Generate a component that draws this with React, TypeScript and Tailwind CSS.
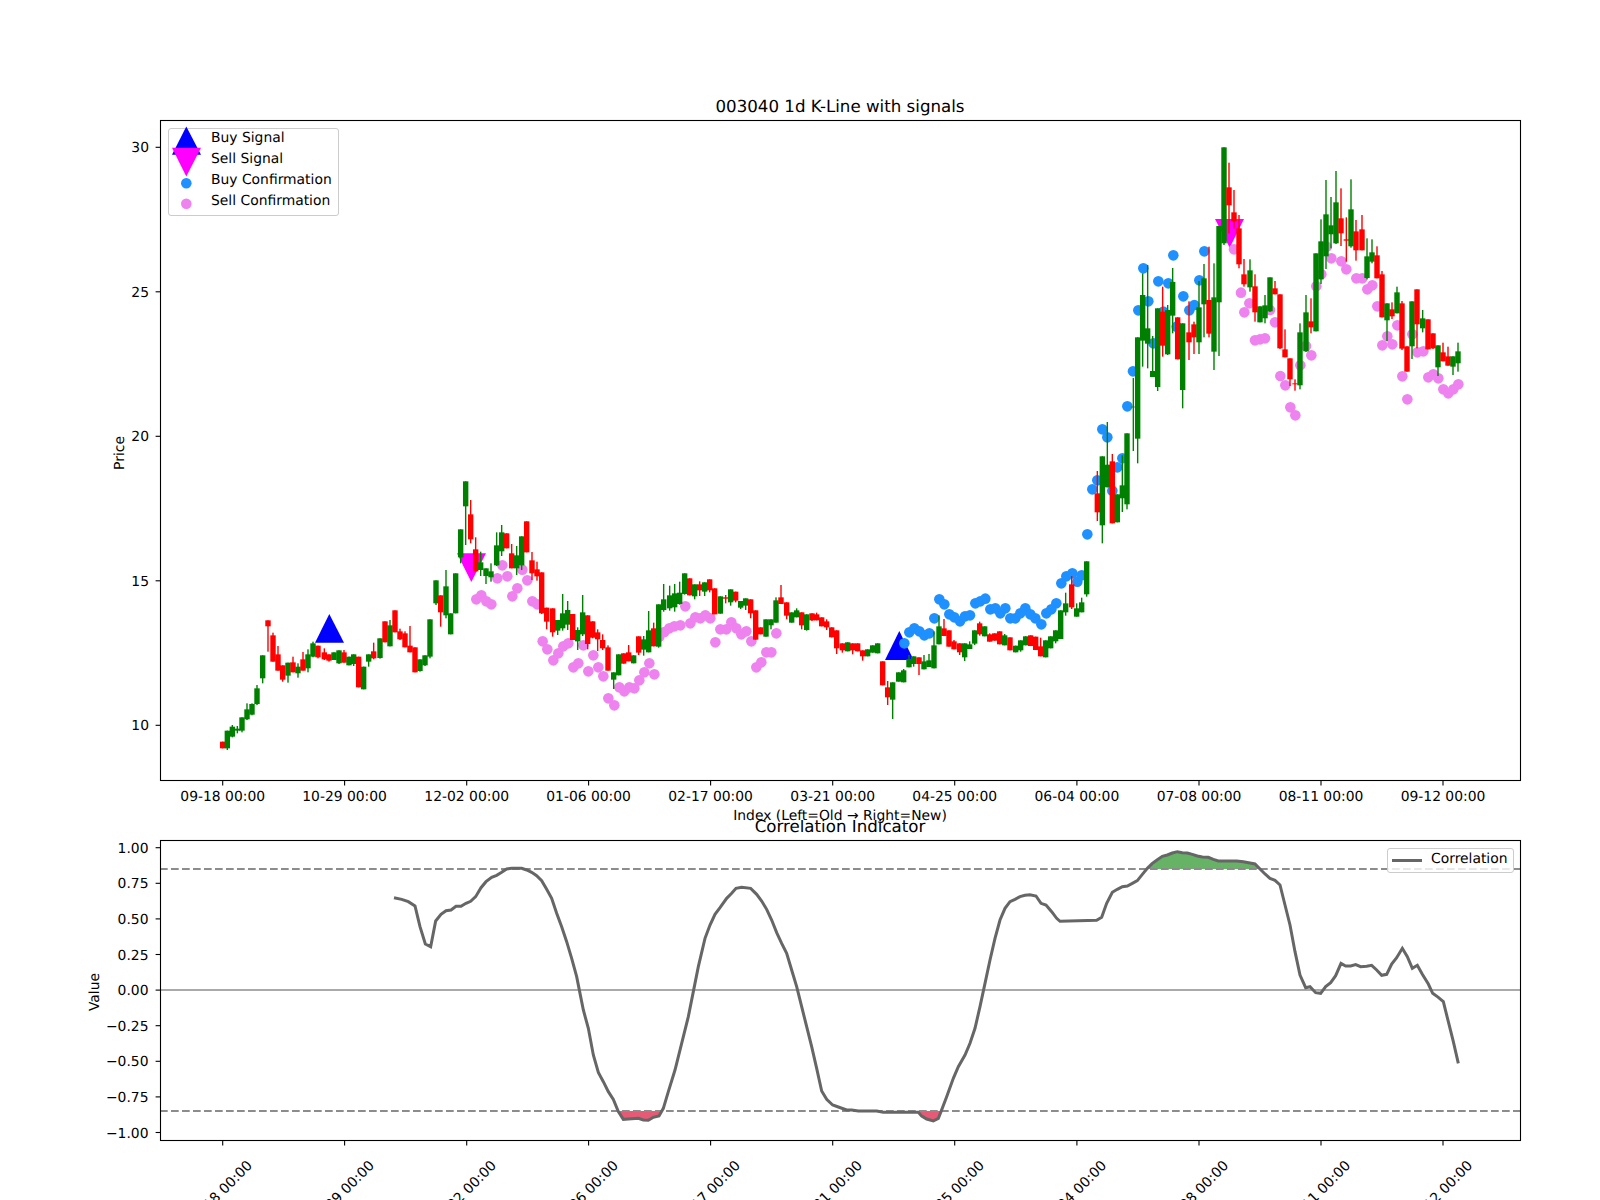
import type { ReactNode } from 'react'

type Candle = [number, number, number, number, number, number]
type Point = [number, number]

const TICK_X = [222.7, 344.6, 466.7, 588.6, 710.6, 832.7, 954.7, 1076.9, 1199, 1321, 1443]
const TICK_LABELS = ['09-18 00:00', '10-29 00:00', '12-02 00:00', '01-06 00:00', '02-17 00:00', '03-21 00:00', '04-25 00:00', '06-04 00:00', '07-08 00:00', '08-11 00:00', '09-12 00:00']
const PRICE_TICKS = [10, 15, 20, 25, 30]
const VALUE_TICKS = ['1.00', '0.75', '0.50', '0.25', '0.00', '−0.25', '−0.50', '−0.75', '−1.00']

const GREEN = '#008000'
const RED = '#ff0000'

// candles read off the zoomed crops: x, wick top, body top, body bottom, wick bottom, 1 = red
const at = (x0: number, y0: number, rows: Candle[]): Candle[] =>
  rows.map(([x, wt, bt, bb, wb, c]) => [x0 + x / 3, y0 + wt / 3, y0 + bt / 3, y0 + bb / 3, y0 + wb / 3, c])

const dots = (x0: number, y0: number, rows: Point[]): Point[] =>
  rows.map(([x, y]) => [x0 + x / 3, y0 + y / 3])

const CANDLES: Candle[] = [
  ...at(200, 440, [
    [68, 905, 905, 925, 925, 1], [82, 872, 872, 925, 930, 0], [97, 855, 860, 890, 892, 0], [112, 858, 866, 872, 880, 0],
    [126, 832, 832, 872, 877, 0], [141, 790, 808, 838, 840, 0], [156, 790, 792, 824, 826, 0], [171, 735, 745, 792, 795, 0],
    [188, 646, 646, 715, 730, 0], [204, 541, 541, 559, 635, 1], [219, 578, 586, 665, 665, 1], [234, 618, 643, 692, 692, 1],
    [248, 676, 676, 719, 725, 1], [264, 668, 668, 707, 728, 0], [279, 650, 667, 697, 697, 1], [294, 670, 680, 700, 713, 0],
    [309, 636, 658, 692, 692, 1], [324, 628, 643, 685, 697, 0], [339, 605, 610, 650, 652, 0], [354, 617, 617, 652, 655, 1],
    [373, 625, 637, 658, 660, 1], [387, 643, 643, 662, 665, 1], [402, 637, 637, 660, 660, 0], [417, 631, 631, 670, 672, 0],
    [432, 630, 637, 668, 668, 1], [447, 650, 650, 676, 676, 0], [461, 643, 643, 672, 678, 0], [476, 650, 650, 742, 742, 1],
    [491, 680, 680, 748, 748, 0], [506, 643, 643, 665, 680, 0], [521, 608, 634, 655, 658, 1], [540, 595, 595, 654, 656, 0],
    [555, 544, 544, 607, 607, 1], [570, 540, 556, 619, 619, 0], [585, 511, 511, 577, 577, 1], [600, 566, 574, 598, 600, 1],
    [615, 574, 580, 622, 622, 1], [630, 558, 617, 637, 637, 1], [645, 622, 622, 697, 697, 1], [660, 658, 658, 693, 695, 0],
    [675, 646, 646, 676, 678, 0], [690, 538, 538, 650, 655, 0], [708, 421, 421, 490, 495, 0], [722, 466, 466, 517, 560, 1],
    [738, 390, 439, 526, 535, 0], [752, 520, 520, 583, 583, 0], [767, 400, 400, 520, 520, 0], [782, 268, 268, 352, 370, 0],
    [797, 124, 124, 199, 315, 0], [812, 180, 223, 298, 310, 1], [827, 292, 328, 394, 394, 1], [842, 335, 367, 390, 408, 0],
    [858, 385, 385, 408, 432, 0], [873, 370, 394, 412, 425, 0], [890, 277, 316, 376, 378, 0], [905, 255, 277, 334, 348, 0],
    [920, 280, 280, 325, 325, 1], [935, 312, 340, 385, 385, 1], [950, 318, 346, 385, 405, 0], [965, 289, 289, 376, 390, 0],
    [980, 244, 244, 337, 337, 1], [996, 336, 361, 400, 420, 1], [1011, 365, 388, 409, 422, 1],
  ]),
  ...at(540, 540, [
    [5, 97, 97, 220, 222, 1], [20, 203, 203, 245, 268, 1], [38, 205, 205, 277, 290, 1], [53, 240, 240, 272, 285, 0],
    [68, 162, 220, 265, 272, 0], [83, 183, 210, 254, 270, 0], [98, 222, 222, 300, 300, 1], [113, 262, 270, 304, 330, 0],
    [128, 165, 217, 283, 288, 0], [143, 226, 226, 312, 328, 1], [158, 244, 244, 293, 295, 1], [173, 268, 277, 298, 333, 1],
    [188, 283, 300, 325, 330, 1], [204, 316, 322, 392, 392, 1], [221, 397, 397, 419, 447, 0], [236, 343, 343, 406, 406, 0],
    [251, 340, 340, 371, 371, 1], [266, 315, 337, 364, 364, 1], [281, 346, 346, 370, 370, 0], [296, 289, 289, 338, 345, 1],
    [311, 288, 298, 329, 347, 0], [326, 213, 271, 337, 337, 0], [341, 248, 265, 319, 319, 1], [356, 193, 193, 320, 323, 0],
    [371, 132, 178, 210, 215, 0], [389, 137, 166, 205, 212, 0], [404, 132, 160, 202, 215, 0], [419, 125, 158, 192, 194, 0],
    [434, 100, 100, 162, 164, 0], [449, 115, 115, 166, 166, 1], [464, 133, 133, 169, 178, 0], [479, 124, 133, 151, 168, 1],
    [494, 127, 127, 155, 168, 0], [509, 118, 118, 151, 157, 1], [524, 145, 145, 223, 223, 1], [541, 169, 169, 221, 221, 0],
    [557, 165, 172, 176, 190, 1], [572, 148, 148, 187, 197, 0], [587, 155, 155, 182, 187, 1], [602, 183, 183, 203, 207, 0],
    [617, 175, 175, 197, 210, 0], [632, 178, 178, 220, 235, 1], [647, 211, 211, 299, 299, 1], [662, 262, 262, 283, 283, 1],
    [678, 238, 238, 290, 290, 0], [693, 238, 238, 256, 268, 0], [708, 172, 181, 248, 248, 0], [723, 135, 172, 192, 192, 1],
    [740, 187, 187, 227, 238, 1], [755, 217, 217, 248, 248, 0], [770, 205, 211, 232, 232, 0], [785, 217, 217, 256, 268, 1],
    [800, 223, 223, 270, 272, 0], [816, 220, 220, 241, 243, 1], [830, 218, 223, 241, 241, 1], [845, 232, 232, 259, 259, 1],
    [860, 238, 244, 262, 270, 1], [875, 262, 262, 292, 292, 1], [890, 271, 271, 325, 342, 1], [907, 310, 310, 331, 338, 1],
    [923, 307, 307, 334, 334, 0], [938, 310, 310, 331, 343, 1], [953, 310, 310, 334, 334, 1], [968, 331, 331, 349, 362, 1],
    [983, 328, 328, 349, 349, 0], [998, 316, 316, 338, 338, 0], [1013, 310, 310, 340, 340, 0], [1028, 364, 364, 436, 436, 1],
    [1043, 423, 442, 472, 495, 1], [1058, 427, 427, 479, 537, 0],
  ]),
  ...at(880, 520, [
    [56, 457, 457, 485, 485, 0], [71, 447, 451, 487, 487, 0], [87, 405, 417, 442, 442, 0], [101, 409, 409, 432, 440, 0],
    [117, 412, 412, 432, 465, 1], [132, 405, 424, 448, 448, 0], [147, 402, 421, 441, 441, 0], [162, 334, 376, 445, 445, 0],
    [177, 286, 319, 373, 373, 0], [192, 297, 325, 348, 348, 1], [207, 331, 331, 380, 380, 1], [222, 360, 364, 388, 388, 1],
    [239, 370, 370, 397, 405, 1], [254, 370, 370, 412, 423, 0], [269, 364, 373, 387, 387, 0], [284, 331, 331, 371, 375, 0],
    [299, 305, 310, 343, 347, 1], [314, 319, 319, 349, 349, 0], [329, 340, 343, 365, 365, 1], [344, 340, 340, 362, 362, 1],
    [359, 334, 334, 373, 373, 1], [374, 342, 346, 376, 376, 0], [390, 352, 352, 391, 391, 1], [407, 377, 377, 397, 397, 0],
    [422, 361, 361, 391, 395, 0], [437, 349, 349, 376, 376, 0], [452, 346, 346, 378, 378, 1], [467, 350, 350, 390, 390, 1],
    [482, 353, 379, 409, 409, 1], [497, 361, 361, 412, 412, 0], [512, 349, 349, 385, 385, 0], [527, 331, 331, 364, 370, 0],
    [542, 271, 271, 357, 357, 0], [557, 218, 250, 277, 287, 0], [575, 168, 193, 262, 267, 1], [590, 250, 265, 290, 290, 0],
    [605, 233, 247, 277, 277, 0], [620, 124, 124, 223, 230, 0],
  ]),
  ...at(1060, 340, [
    [112, 393, 460, 517, 543, 1], [127, 349, 349, 556, 610, 0], [142, 246, 374, 442, 442, 0],
    [157, 342, 364, 550, 550, 1], [172, 463, 463, 547, 547, 0], [187, 346, 436, 475, 516, 0], [201, 280, 280, 493, 508, 0],
    [220, 114, 200, 202, 333, 0],
  ]),
  ...at(1060, 130, [
    [233, 622, 622, 926, 1000, 0], [248, 430, 495, 632, 710, 0], [263, 405, 595, 641, 715, 0], [278, 618, 723, 741, 741, 0],
    [293, 535, 535, 771, 783, 0], [308, 470, 545, 647, 680, 1], [323, 525, 540, 673, 675, 0], [338, 414, 456, 557, 610, 0],
    [353, 562, 562, 688, 688, 1], [368, 580, 580, 780, 835, 0], [387, 514, 607, 637, 690, 1], [402, 575, 583, 622, 672, 1],
    [417, 453, 532, 637, 672, 0], [432, 402, 445, 523, 622, 0], [447, 350, 510, 611, 622, 1], [462, 400, 502, 665, 720, 0],
    [477, 288, 288, 517, 678, 0], [492, 52, 52, 340, 345, 0], [507, 98, 172, 226, 310, 1], [522, 180, 247, 274, 295, 1],
    [537, 255, 295, 403, 415, 1], [552, 387, 433, 463, 470, 1],
  ]),
  ...at(1240, 150, [
    [30, 328, 361, 412, 425, 0], [45, 373, 409, 487, 515, 1], [60, 469, 469, 517, 517, 0], [75, 435, 466, 505, 520, 0],
    [90, 382, 382, 484, 486, 0], [105, 393, 415, 433, 433, 1], [120, 433, 433, 595, 597, 1], [135, 538, 598, 622, 622, 1],
    [150, 625, 625, 688, 708, 1], [165, 688, 700, 703, 722, 1], [180, 520, 547, 706, 718, 0], [198, 435, 487, 604, 606, 0],
    [213, 445, 514, 532, 550, 1], [228, 310, 310, 544, 544, 0], [243, 208, 274, 388, 402, 0], [258, 90, 193, 319, 357, 0],
    [273, 141, 226, 253, 295, 0], [288, 63, 157, 280, 282, 0], [303, 115, 205, 250, 288, 1], [319, 202, 268, 272, 335, 1],
    [333, 88, 178, 289, 293, 0], [348, 210, 244, 301, 332, 1], [366, 195, 238, 301, 301, 1], [381, 265, 319, 384, 388, 0],
    [396, 268, 307, 335, 340, 0], [411, 289, 316, 385, 385, 1], [426, 363, 373, 502, 502, 1], [441, 460, 460, 511, 573, 0],
    [456, 457, 478, 499, 507, 1], [471, 410, 427, 490, 490, 0], [486, 453, 460, 596, 600, 1], [501, 589, 589, 665, 665, 1],
    [516, 454, 454, 589, 627, 0], [531, 418, 418, 523, 595, 1], [548, 480, 505, 535, 547, 0], [564, 508, 508, 598, 598, 1],
    [579, 550, 550, 595, 597, 1], [594, 586, 586, 652, 678, 0], [609, 578, 607, 634, 634, 1], [624, 590, 619, 647, 647, 1],
    [639, 619, 619, 650, 675, 0], [654, 578, 604, 640, 665, 0],
  ]),
].sort((a, b) => a[0] - b[0])

const BUY_DOTS: Point[] = [
  ...dots(880, 520, [
    [73, 370], [88, 337], [103, 325], [118, 334], [133, 346], [148, 340], [163, 295], [178, 238], [193, 253], [208, 283],
    [223, 292], [240, 304], [255, 289], [270, 286], [286, 250], [301, 244], [316, 236], [331, 268], [346, 265], [361, 280],
    [376, 265], [391, 295], [406, 295], [421, 280], [436, 265], [451, 283], [466, 295], [484, 313], [499, 280], [514, 268],
    [529, 250], [544, 190], [559, 169], [577, 160], [592, 185], [605, 166], [622, 43],
  ]),
  ...dots(1060, 340, [
    [97, 448], [112, 421], [127, 268], [142, 292], [157, 452], [172, 382], [187, 355], [202, 199], [219, 94], [280, 10],
  ]),
  ...dots(1060, 130, [
    [235, 541], [250, 415], [265, 514], [295, 454], [310, 545], [325, 460], [340, 376], [350, 590], [370, 499], [388, 541],
    [403, 525], [418, 451], [433, 364],
  ]),
]

const SELL_DOTS: Point[] = [
  ...dots(200, 440, [
    [829, 478], [844, 466], [859, 484], [874, 493], [892, 415], [907, 376], [922, 409], [937, 469], [952, 445], [967, 389],
    [982, 421], [997, 484], [1012, 493],
  ]),
  ...dots(540, 540, [
    [8, 304], [22, 328], [40, 361], [55, 340], [70, 319], [85, 310], [100, 382], [115, 370], [130, 316], [145, 394],
    [160, 346], [175, 382], [190, 409], [205, 475], [223, 496], [238, 442], [253, 454], [268, 442], [283, 445], [298, 421],
    [313, 397], [328, 370], [343, 403], [358, 290], [373, 276], [388, 265], [403, 259], [421, 256], [436, 199], [451, 250],
    [466, 232], [481, 235], [496, 226], [511, 235], [526, 307], [541, 268], [559, 268], [574, 247], [589, 265], [604, 283],
    [619, 274], [634, 304], [649, 382], [664, 367], [679, 337], [694, 337], [709, 280],
  ]),
  ...dots(1060, 130, [[522, 358]]),
  ...dots(1240, 150, [
    [3, 428], [13, 487], [28, 460], [45, 571], [60, 568], [75, 565], [90, 480], [105, 517], [121, 678], [136, 706], [151, 772],
    [166, 796], [181, 646], [198, 588], [214, 616], [229, 409], [244, 373], [260, 290], [274, 325], [304, 334], [319, 358],
    [349, 385], [367, 385], [382, 418], [397, 406], [412, 469], [427, 586], [442, 559], [457, 583], [472, 526], [487, 679],
    [502, 748], [517, 553], [532, 607], [550, 604], [565, 682], [580, 673], [595, 685], [610, 718], [625, 730], [640, 718],
    [655, 703],
  ]),
]

const CORRELATION: Point[] = [
  ...dots(80, 780, [
    [942, 353], [965, 358], [985, 365], [1005, 378], [1020, 440], [1036, 492], [1052, 500], [1067, 423], [1083, 403],
    [1098, 392], [1113, 390], [1128, 379], [1143, 379], [1158, 370], [1172, 364], [1187, 350], [1203, 323], [1218, 305],
    [1235, 292], [1250, 286], [1265, 277], [1280, 267], [1295, 265], [1325, 265], [1340, 270], [1355, 277], [1370, 287],
    [1385, 302], [1400, 328], [1415, 355], [1430, 400], [1445, 440], [1460, 485], [1475, 535], [1490, 590],
  ]),
  ...dots(560, 780, [
    [60, 640], [70, 690], [85, 745], [100, 825], [115, 877], [130, 905], [145, 935], [160, 958], [175, 995], [190, 1018],
    [205, 1017], [235, 1015], [250, 1020], [265, 1021], [280, 1012], [297, 1008], [310, 985], [325, 935], [345, 870],
    [365, 790], [385, 710], [400, 635], [415, 560], [435, 475], [450, 435], [465, 403], [480, 383], [500, 355], [515, 340],
    [528, 325], [545, 322], [572, 325], [590, 343], [605, 363], [620, 388], [635, 420], [650, 458], [665, 490], [680, 520],
    [695, 570], [710, 620], [725, 680], [740, 740], [755, 800], [770, 865], [785, 933], [800, 958], [818, 975], [835, 981],
    [860, 990], [875, 990], [895, 993], [950, 993], [970, 997], [1075, 997], [1085, 1008], [1100, 1017], [1120, 1023],
    [1135, 1015], [1143, 995], [1160, 950], [1180, 895], [1195, 860], [1215, 825], [1230, 790], [1245, 745], [1260, 680],
    [1275, 610], [1290, 540], [1305, 475], [1320, 420], [1335, 385], [1350, 365], [1365, 358], [1380, 350], [1395, 346],
    [1410, 344], [1428, 348], [1443, 370], [1458, 375], [1475, 395], [1490, 415],
  ]),
  ...dots(1040, 780, [
    [60, 424], [170, 421], [185, 412], [200, 370], [217, 337], [232, 328], [247, 320], [262, 318], [277, 310], [292, 302],
    [307, 283], [322, 265], [337, 250], [352, 239], [367, 229], [382, 225], [397, 219], [412, 215], [427, 218], [442, 219],
    [457, 223], [472, 228], [487, 231], [505, 232], [520, 238], [535, 243], [590, 243], [610, 245], [645, 252], [660, 267],
    [675, 282], [690, 295], [705, 301], [720, 315], [735, 375], [750, 435], [765, 515], [780, 585], [797, 623], [810, 620],
    [827, 638], [842, 640], [857, 620], [872, 608], [887, 587], [903, 550], [917, 558], [932, 558], [947, 554], [962, 560],
    [980, 559], [995, 556], [1010, 570], [1025, 586], [1040, 583], [1055, 552], [1070, 533], [1087, 505], [1102, 530],
    [1117, 565], [1132, 556], [1147, 583], [1165, 612], [1178, 640], [1195, 652], [1210, 665], [1225, 725], [1240, 785],
    [1255, 850],
  ]),
]

const priceY = (p: number) => 147.3 + (30 - p) * 28.9
const valueY = (i: number) => 847.7 + i * 35.6
const UPPER = 869
const LOWER = 1111

const linePoints = CORRELATION.map((p) => p.join(',')).join(' ')
const first = CORRELATION[0][0]
const last = CORRELATION[CORRELATION.length - 1][0]

function MainChart() {
  return (
    <svg width={1600} height={820} className="block overflow-visible">
      <polygon points="315,642.7 344,642.7 329.3,614" fill="#0000ff" />
      <polygon points="885,660 913.7,660 899.3,631" fill="#0000ff" />
      <polygon points="457,553.3 486,553.3 471.3,582" fill="#ff00ff" />
      <polygon points="1215,219 1244,219 1229.7,247.7" fill="#ff00ff" />
      {BUY_DOTS.map(([x, y], i) => (
        <circle key={i} cx={x} cy={y} r={5.3} fill="#1e90ff" />
      ))}
      {SELL_DOTS.map(([x, y], i) => (
        <circle key={i} cx={x} cy={y} r={5.3} fill="#ee82ee" />
      ))}
      {CANDLES.map(([x, wt, bt, bb, wb, c], i) => (
        <g key={i} fill={c ? RED : GREEN}>
          <rect x={x - 0.7} y={wt} width={1.4} height={wb - wt} />
          <rect x={x - 2.7} y={bt} width={5.4} height={bb - bt} />
        </g>
      ))}
      <rect x={160.5} y={120.5} width={1360} height={660} fill="none" stroke="#000" strokeWidth={1.1} />
      {PRICE_TICKS.map((p) => (
        <g key={p}>
          <line x1={155.6} x2={160} y1={priceY(p)} y2={priceY(p)} stroke="#000" strokeWidth={1.1} />
          <text x={149} y={priceY(p) + 5} textAnchor="end">{p}</text>
        </g>
      ))}
      {TICK_X.map((x, i) => (
        <g key={x}>
          <line x1={x} x2={x} y1={781} y2={785.4} stroke="#000" strokeWidth={1.1} />
          <text x={x} y={801} textAnchor="middle">{TICK_LABELS[i]}</text>
        </g>
      ))}
      <text x={840} y={112} textAnchor="middle" className="text-[16.67px]">003040 1d K-Line with signals</text>
      <text x={840} y={820} textAnchor="middle">Index (Left=Old → Right=New)</text>
      <text transform="translate(124 453) rotate(-90)" textAnchor="middle">Price</text>
    </svg>
  )
}

function CorrelationChart() {
  return (
    <svg width={1600} height={380} viewBox="0 820 1600 380" className="block">
      <defs>
        <clipPath id="above"><rect x={160} y={840} width={1360} height={UPPER - 840} /></clipPath>
        <clipPath id="below"><rect x={160} y={LOWER} width={1360} height={1140 - LOWER} /></clipPath>
      </defs>
      <polygon points={`${first},${UPPER} ${linePoints} ${last},${UPPER}`} fill="#008000" fillOpacity={0.6} clipPath="url(#above)" />
      <polygon points={`${first},${LOWER} ${linePoints} ${last},${LOWER}`} fill="#dc143c" fillOpacity={0.7} clipPath="url(#below)" />
      <line x1={160} x2={1520} y1={UPPER} y2={UPPER} stroke="#8c8c8c" strokeWidth={2.08} strokeDasharray="7.7 3.3" />
      <line x1={160} x2={1520} y1={LOWER} y2={LOWER} stroke="#8c8c8c" strokeWidth={2.08} strokeDasharray="7.7 3.3" />
      <line x1={160} x2={1520} y1={990} y2={990} stroke="#aaaaaa" strokeWidth={2.08} />
      <polyline points={linePoints} fill="none" stroke="#666666" strokeWidth={3} />
      <rect x={160.5} y={840.5} width={1360} height={300} fill="none" stroke="#000" strokeWidth={1.1} />
      {VALUE_TICKS.map((v, i) => (
        <g key={v}>
          <line x1={155.6} x2={160} y1={valueY(i)} y2={valueY(i)} stroke="#000" strokeWidth={1.1} />
          <text x={148.5} y={valueY(i) + 5} textAnchor="end">{v}</text>
        </g>
      ))}
      {TICK_X.map((x, i) => (
        <g key={x}>
          <line x1={x} x2={x} y1={1141} y2={1145.4} stroke="#000" strokeWidth={1.1} />
          <text transform={`translate(${x - 2.5} 1193.5) rotate(-45)`} textAnchor="middle" dominantBaseline="central">{TICK_LABELS[i]}</text>
        </g>
      ))}
      <text x={840} y={831.5} textAnchor="middle" className="text-[16.67px]">Correlation Indicator</text>
      <text transform="translate(99 992) rotate(-90)" textAnchor="middle">Value</text>
    </svg>
  )
}

function LegendRow({ label, children }: { label: string; children: ReactNode }) {
  return (
    <div className="flex h-[21px] items-center">
      <svg width={30} height={21} className="shrink-0 overflow-visible">{children}</svg>
      <span className="ml-[9px] whitespace-nowrap pb-px">{label}</span>
    </div>
  )
}

export default function App() {
  return (
    <main className="h-[1200px] w-[1600px] overflow-hidden bg-white font-['DejaVu_Sans',sans-serif] text-[13.89px] leading-none text-black [text-rendering:geometricPrecision]">
      <section className="relative">
        <MainChart />
        <div className="absolute left-[168px] top-[127.5px] h-[88px] w-[170.5px] rounded-[3px] border border-[#cccccc] bg-white/80 pl-[3px]">
          <LegendRow label="Buy Signal">
            <polygon points="0,25.8 29,25.8 14.3,-2.5" fill="#0000ff" />
          </LegendRow>
          <LegendRow label="Sell Signal">
            <polygon points="0,-2.2 29,-2.2 14.3,26.5" fill="#ff00ff" />
          </LegendRow>
          <LegendRow label="Buy Confirmation">
            <circle cx={14.3} cy={12.2} r={5.3} fill="#1e90ff" />
          </LegendRow>
          <LegendRow label="Sell Confirmation">
            <circle cx={14.3} cy={11.8} r={5.3} fill="#ee82ee" />
          </LegendRow>
        </div>
      </section>
      <section className="relative">
        <CorrelationChart />
        <div className="absolute left-[1386.5px] top-[27.5px] flex h-[25px] w-[127px] items-center rounded-[3px] border border-[#cccccc] bg-white/80 pl-[4px]">
          <span className="h-[3px] w-[30.5px] bg-[#666666]" />
          <span className="ml-[9px]">Correlation</span>
        </div>
      </section>
    </main>
  )
}
